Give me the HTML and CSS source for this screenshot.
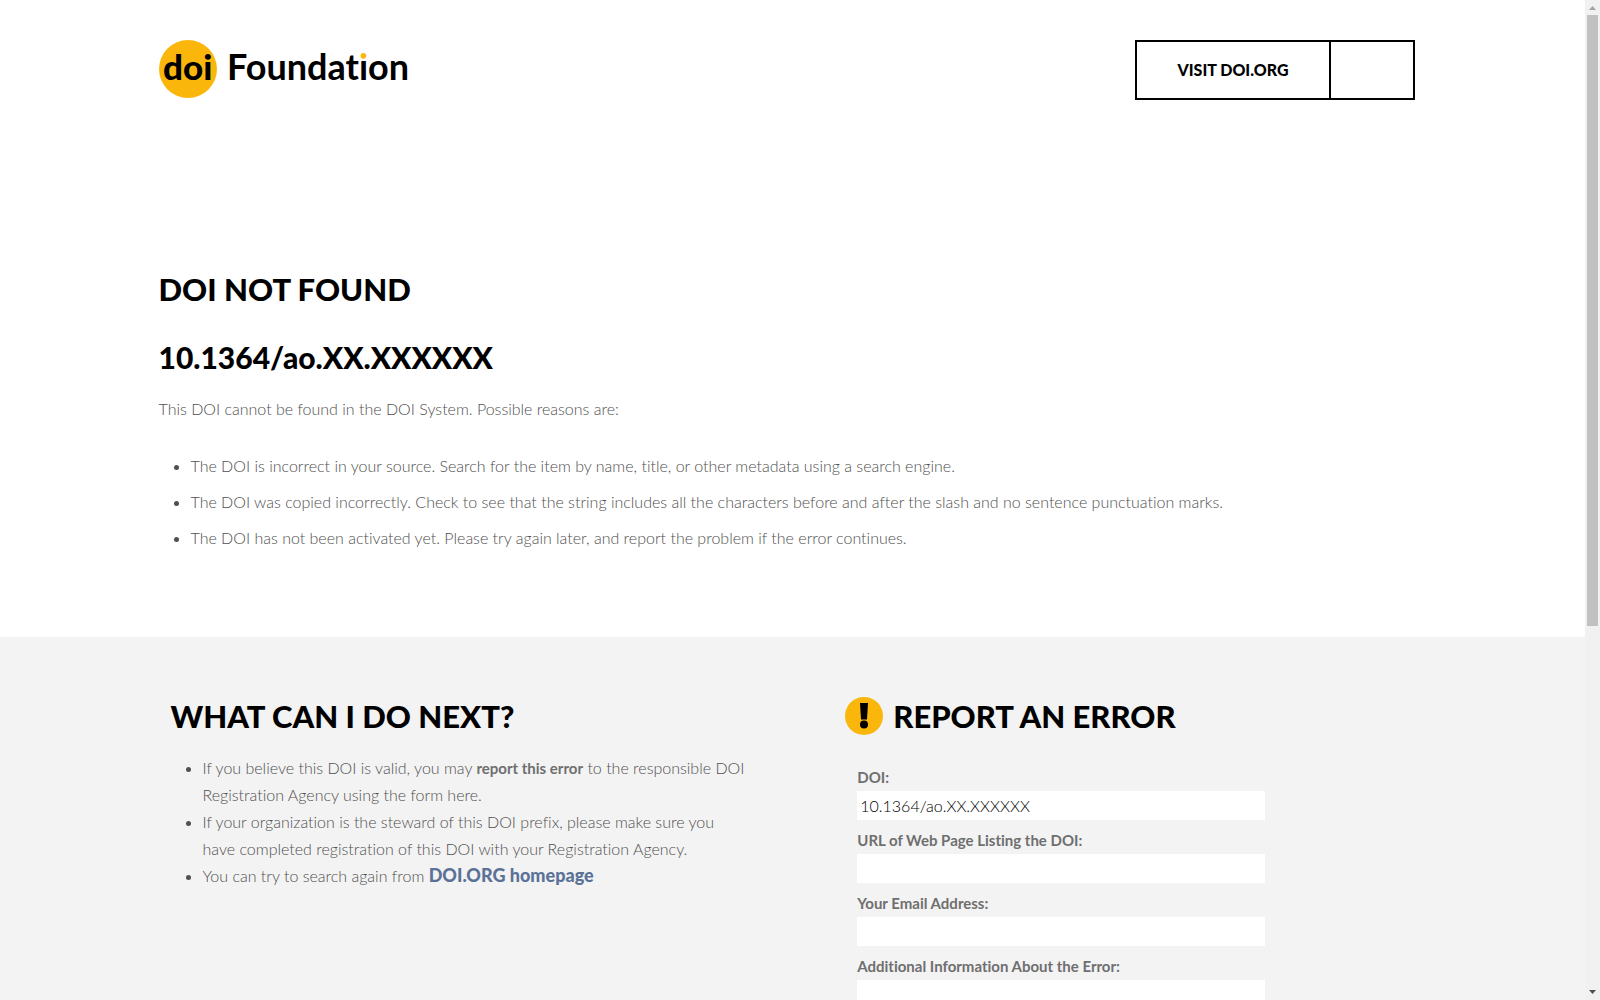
FILE: index.html
```html
<!DOCTYPE html>
<html lang="en">
<head>
<meta charset="utf-8">
<title>DOI Not Found</title>
<link rel="stylesheet" href="styles.css">
</head>
<body>
<div class="page">
  <header class="header wrap">
    <a class="logo" href="#" aria-label="doi Foundation">
      <svg width="260" height="60" viewBox="0 0 260 60">
        <defs>
          <linearGradient id="dot" gradientUnits="userSpaceOnUse" x1="0" y1="0" x2="0" y2="60">
            <stop offset="0.34" stop-color="#fbb60b"/>
            <stop offset="0.34" stop-color="#000"/>
          </linearGradient>
        </defs>
        <circle cx="29" cy="29" r="29" fill="#fbb60b"/>
        <text class="logo-text logo-mark" x="4" y="40">doi</text>
        <text class="logo-text" x="68" y="40">Foundat<tspan fill="url(#dot)">i</tspan>on</text>
      </svg>
    </a>
    <nav class="actions">
      <a class="visit" href="#">VISIT DOI.ORG</a>
      <button class="menu" type="button" aria-label="Menu"></button>
    </nav>
  </header>
  <main>
    <section class="intro wrap">
      <h1 class="title">DOI NOT FOUND</h1>
      <h2 class="doi">10.1364/ao.XX.XXXXXX</h2>
      <p class="lead">This DOI cannot be found in the DOI System. Possible reasons are:</p>
      <ul class="list reasons">
        <li>The DOI is incorrect in your source. Search for the item by name, title, or other metadata using a search engine.</li>
        <li>The DOI was copied incorrectly. Check to see that the string includes all the characters before and after the slash and no sentence punctuation marks.</li>
        <li>The DOI has not been activated yet. Please try again later, and report the problem if the error continues.</li>
      </ul>
    </section>
    <section class="help">
      <div class="help-grid wrap">
        <div class="next">
          <h2 class="title">WHAT CAN I DO NEXT?</h2>
          <ul class="list">
            <li>If you believe this DOI is valid, you may <strong>report this error</strong> to the responsible DOI <br>Registration Agency using the form here.</li>
            <li>If your organization is the steward of this DOI prefix, please make sure you <br>have completed registration of this DOI with your Registration Agency.</li>
            <li>You can try to search again from <a class="link" href="#">DOI.ORG homepage</a></li>
          </ul>
        </div>
        <div class="report">
          <div class="report-head">
            <svg width="38" height="38" viewBox="0 0 38 38" aria-hidden="true">
              <circle cx="19" cy="19" r="19" fill="#fbb60b"/>
              <path d="M15 6h8l-1 16.500h-6z"/>
              <circle cx="19" cy="27.500" r="4"/>
            </svg>
            <h2 class="title">REPORT AN ERROR</h2>
          </div>
          <form class="form">
            <label for="doi">DOI:</label>
            <input id="doi" type="text" value="10.1364/ao.XX.XXXXXX">
            <label for="url">URL of Web Page Listing the DOI:</label>
            <input id="url" type="text">
            <label for="email">Your Email Address:</label>
            <input id="email" type="email">
            <label for="info">Additional Information About the Error:</label>
            <textarea id="info"></textarea>
          </form>
        </div>
      </div>
    </section>
  </main>
</div>
<div class="scrollbar" aria-hidden="true">
  <svg width="15" height="15" viewBox="0 0 15 15"><path d="M4 10h7L7.500 6z" fill="#a3a3a3"/></svg>
  <div class="track"><div class="thumb"></div></div>
  <svg width="15" height="15" viewBox="0 0 15 15"><path d="M4 5h7L7.500 9z" fill="#505050"/></svg>
</div>
</body>
</html>
```
FILE: styles.css
```css
* { box-sizing: border-box; }
body {
  margin: 0;
  background: #fff;
  color: #505050;
  font: 300 16px/27px Lato, "Liberation Sans", sans-serif;
  font-variant-ligatures: none;
}
.page { height: 100vh; overflow: hidden; margin-right: 15px; }
.scrollbar {
  position: fixed;
  inset: 0 0 0 auto;
  display: flex;
  flex-direction: column;
  width: 15px;
  background: #f1f1f1;
}
.scrollbar svg { display: block; }
.track { flex: 1; padding: 0 2px; }
.thumb { height: 63%; background: #c1c1c1; }
.wrap { width: 80%; margin: 0 auto; }
.header {
  display: flex;
  justify-content: space-between;
  align-items: flex-start;
  padding: 40px 12px 0 0;
}
.logo { display: block; height: 60px; }
.logo-text {
  font: 700 36px Lato, sans-serif;
  font-variant-ligatures: none;
  fill: #000;
}
.logo-mark { font-size: 35px; font-weight: 900; }
.actions { display: flex; height: 60px; border: 2px solid #000; }
.visit {
  display: flex;
  align-items: center;
  padding: 0 40px 2px;
  color: #000;
  font-weight: 900;
  text-decoration: none;
}
.menu { width: 84px; border: 0; border-left: 2px solid #000; background: none; }
.intro { padding: 169px 0 86px; }
.title { margin: 0; color: #000; font-size: 31px; line-height: 40px; font-weight: 900; }
.doi { margin: 30px 0 0; color: #000; font-size: 30px; line-height: 36px; font-weight: 900; }
.lead { margin: 20px 0 0; }
.list { margin: 0; padding-left: 32px; }
.reasons { display: grid; gap: 9px; margin-top: 30px; }
.help { background: #f3f3f3; padding: 59px 0; min-height: 958px; }
.help-grid { display: grid; grid-template-columns: 46% 1fr; gap: 97px; padding-left: 12px; }
.next .list { margin-top: 18px; }
strong { color: #6f6f6f; font-size: 15px; line-height: 1; font-weight: 700; }
.link { color: #5a7297; font-size: 18px; line-height: 1; font-weight: 900; text-decoration: none; }
.report-head { display: flex; align-items: center; gap: 10px; }
.form { display: flex; flex-direction: column; width: 420px; padding: 28px 0 0 12px; }
.form label { color: #6f6f6f; font-size: 15px; font-weight: 700; }
.form input, .form textarea {
  width: 100%;
  height: 29px;
  margin: 0 0 7px;
  padding: 1px 3px;
  border: 0;
  background: #fff;
  color: #000;
  font: inherit;
}
.form textarea { height: 140px; }
```
